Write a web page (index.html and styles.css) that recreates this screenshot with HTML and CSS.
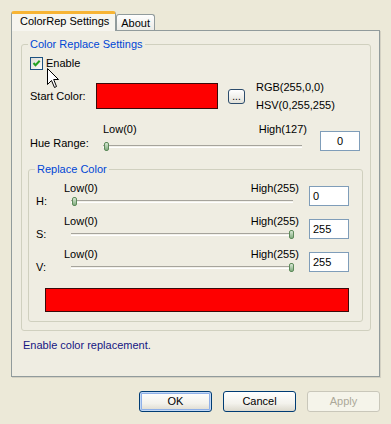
FILE: index.html
```html
<!DOCTYPE html>
<html lang="en">

<head>
    <meta charset="UTF-8">
    <title>ColorRep Settings</title>
    <link rel="stylesheet" href="styles.css">
</head>

<body>
    <div class="dialog">
        <div class="tabs">
            <div class="tab active">ColorRep Settings</div>
            <div class="tab">About</div>
        </div>

        <div class="page">
            <fieldset class="group outer">
                <legend>Color Replace Settings</legend>

                <label class="enable">
                    <span class="checkbox">
                        <svg width="11" height="11" viewBox="0 0 11 11">
                            <path d="M2.5 5 L4.5 7.2 L8.7 2.8" fill="none" stroke="#21a121" stroke-width="2" />
                        </svg>
                    </span>
                    Enable
                </label>

                <div class="start-row">
                    <span class="lbl start-lbl">Start Color:</span>
                    <span class="swatch"></span>
                    <span class="dots">...</span>
                    <div class="values">
                        <div>RGB(255,0,0)</div>
                        <div>HSV(0,255,255)</div>
                    </div>
                </div>

                <div class="hue-row">
                    <span class="lbl hue-lbl">Hue Range:</span>
                    <div class="slider hue-slider">
                        <div class="ticks"><span>Low(0)</span><span>High(127)</span></div>
                        <div class="track"><div class="groove"></div><span class="thumb min"></span></div>
                    </div>
                    <div class="edit center">0</div>
                </div>

                <fieldset class="group inner">
                    <legend>Replace Color</legend>

                    <div class="chan-row">
                        <span class="lbl chan-lbl">H:</span>
                        <div class="slider">
                            <div class="ticks"><span>Low(0)</span><span>High(255)</span></div>
                            <div class="track"><div class="groove"></div><span class="thumb min"></span></div>
                        </div>
                        <div class="edit">0</div>
                    </div>

                    <div class="chan-row">
                        <span class="lbl chan-lbl">S:</span>
                        <div class="slider">
                            <div class="ticks"><span>Low(0)</span><span>High(255)</span></div>
                            <div class="track"><div class="groove"></div><span class="thumb max"></span></div>
                        </div>
                        <div class="edit">255</div>
                    </div>

                    <div class="chan-row">
                        <span class="lbl chan-lbl">V:</span>
                        <div class="slider">
                            <div class="ticks"><span>Low(0)</span><span>High(255)</span></div>
                            <div class="track"><div class="groove"></div><span class="thumb max"></span></div>
                        </div>
                        <div class="edit">255</div>
                    </div>

                    <div class="result"></div>
                </fieldset>
            </fieldset>

            <p class="status">Enable color replacement.</p>
        </div>

        <div class="buttons">
            <span class="btn default">OK</span>
            <span class="btn">Cancel</span>
            <span class="btn disabled">Apply</span>
        </div>
    </div>

    <svg class="cursor" width="13" height="21" viewBox="0 0 13 21">
        <path d="M0.5 0.5 L0.5 16.5 L4.5 12.5 L7.5 19.5 L9.5 18.5 L6.7 11.5 L11.5 11.5 Z" fill="#fff" stroke="#000" stroke-width="1" />
    </svg>
</body>

</html>
```

FILE: styles.css
```css
* {
    box-sizing: border-box;
}

body {
    position: relative;
    margin: 0;
    height: 424px;
    overflow: hidden;
    background-color: #ece9d8;
    font: 11px/13px "Liberation Sans", Arial, sans-serif;
    color: #000;
}

.dialog {
    padding: 11px 11px 0;
}

/* tabs */

.tabs {
    display: flex;
    align-items: flex-end;
}

.tab {
    height: 16px;
    padding: 0 4px;
    line-height: 16px;
    border: 1px solid #919b9c;
    border-bottom: none;
    border-radius: 3px 3px 0 0;
    background: linear-gradient(#fefefe, #ecebe6);
}

.tab.active {
    position: relative;
    z-index: 1;
    height: 20px;
    margin-bottom: -1px;
    padding: 0 6px 0 8px;
    line-height: 14px;
    border-top: 3px solid #f7b434;
    background: #f6f5ef;
}

.page {
    height: 347px;
    padding: 7px 8px 0 9px;
    border: 1px solid #919b9c;
    background: #efede2;
    box-shadow: 1px 1px 0 #d4d1c3;
}

/* group boxes */

.group {
    margin: 0;
    min-width: 0;
    border: 1px solid #d0d0bf;
    border-radius: 3px;
}

.group legend {
    padding: 0 2px;
    line-height: 13px;
    color: #0046d5;
}

.outer {
    padding: 0 7px 8px 6px;
}

.inner {
    margin-top: 11px;
    padding: 0 7px 9px 6px;
}

.enable {
    display: flex;
    align-items: center;
    gap: 3px;
    height: 13px;
    margin: 6px 0 0 2px;
}

.checkbox {
    display: flex;
    align-items: center;
    justify-content: center;
    width: 13px;
    height: 13px;
    border: 1px solid #1c5180;
    background: linear-gradient(135deg, #dcdcd7, #fbfbf9);
}

.start-row {
    display: flex;
    align-items: center;
    height: 26px;
    margin: 13px 0 0 2px;
}

.start-lbl {
    width: 66px;
}

.swatch {
    width: 122px;
    height: 26px;
    border: 1px solid #3a0a0a;
    background: #fe0000;
}

.dots {
    width: 17px;
    height: 15px;
    margin-left: 10px;
    border: 1px solid #2c4c6c;
    border-radius: 3px;
    background: linear-gradient(#fff, #e3e2da);
    font-size: 10px;
    line-height: 13px;
    text-align: center;
}

.values {
    margin-left: 11px;
    line-height: 18px;
}

/* sliders */

.hue-row {
    display: flex;
    margin: 14px 0 0 2px;
}

.hue-lbl {
    width: 73px;
    align-self: flex-end;
    margin-bottom: 2px;
}

.slider {
    width: 235px;
}

.hue-slider {
    width: 204px;
}

.ticks {
    display: flex;
    justify-content: space-between;
}

.track {
    position: relative;
    display: flex;
    align-items: center;
    height: 12px;
    margin: 0 6px 0 7px;
}

.hue-slider .track {
    margin: 4px 5px 0 0;
}

.groove {
    flex: 1;
    height: 3px;
    border-top: 1px solid #a6a49c;
    border-bottom: 1px solid #fff;
    background: #f2f1ea;
}

.thumb {
    position: absolute;
    top: 2px;
    width: 5px;
    height: 9px;
    border: 1px solid #5d8a5a;
    border-radius: 2px;
    background: linear-gradient(#d8e8d5, #82ac7f);
}

.thumb.min {
    left: 1px;
}

.thumb.max {
    right: -1px;
}

.edit {
    width: 40px;
    height: 20px;
    margin: 8px 0 0 13px;
    padding: 0 3px;
    border: 1px solid #7f9db9;
    background: #fff;
    line-height: 18px;
}

.edit.center {
    text-align: center;
}

.chan-row {
    display: flex;
    height: 33px;
}

.chan-row:first-of-type {
    margin-top: 6px;
}

.chan-lbl {
    width: 28px;
    margin: 13px 0 0 1px;
}

.chan-row .edit {
    margin: 4px 0 0 10px;
}

.result {
    width: 304px;
    height: 24px;
    margin: 7px 0 0 10px;
    border: 1px solid #3a0a0a;
    background: #fe0000;
}

.status {
    margin: 8px 0 0 2px;
    color: #161682;
}

/* dialog buttons */

.buttons {
    display: flex;
    justify-content: flex-end;
    gap: 11px;
    margin-top: 14px;
}

.btn {
    width: 73px;
    height: 21px;
    border: 1px solid #003c74;
    border-radius: 3px;
    background: linear-gradient(#fff, #f3f2ec 60%, #dcd9cd);
    line-height: 19px;
    text-align: center;
}

.btn.default {
    box-shadow: inset 0 0 0 1px #c2d8f5, inset 0 0 0 2px #8fb0e8;
}

.btn.disabled {
    border-color: #c9c7ba;
    background: #f5f4ea;
    color: #aca899;
}

.cursor {
    position: absolute;
    left: 47px;
    top: 68px;
}
```
